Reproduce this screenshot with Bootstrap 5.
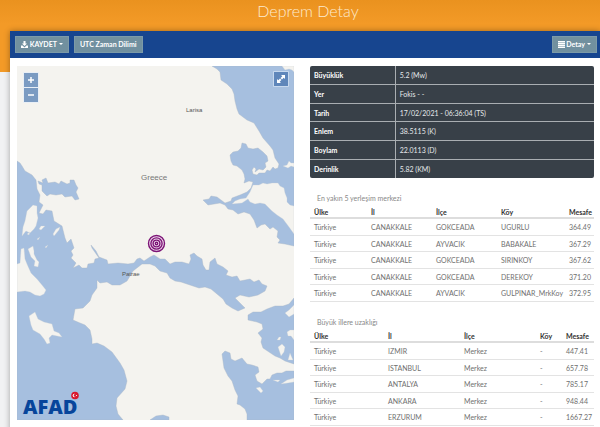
<!DOCTYPE html>
<html lang="tr">
<head>
<meta charset="utf-8">
<meta name="viewport" content="width=device-width, initial-scale=1">
<title>Deprem Detay</title>
<link rel="stylesheet" href="https://cdn.jsdelivr.net/npm/bootstrap@5.3.0/dist/css/bootstrap.min.css">
<style>
body{background:linear-gradient(#ea921f,#f39a27 24px,#f39a27 72px,#f1f2f3 72px) no-repeat #f1f2f3;font-family:Lato,Roboto,sans-serif;font-size:7px;line-height:10px;color:#6f6f6f;overflow-x:hidden}
.page-title{font-size:16px;line-height:20px;font-weight:300;color:#fdebcf;padding:1px 0 10px 16px}
.panel{background:#fff;margin-left:10px;box-shadow:0 0 6px #0005}
.toolbar{background:#17458f;padding:5px 3px 5px 5px;gap:5px}
.tool-btn{--bs-btn-font-size:7px;--bs-btn-line-height:11px;--bs-btn-padding-x:5px;--bs-btn-padding-y:2px;--bs-btn-border-radius:0;--bs-btn-font-weight:700;--bs-btn-color:#fff;--bs-btn-bg:#71909f;--bs-btn-border-color:#7c9aa8;--bs-btn-hover-bg:#5f7f8f;--bs-btn-hover-color:#fff}
.tool-btn::after{margin-left:2px;border-width:2px}
.tool-btn svg{width:7px;height:7px;vertical-align:-1px}
.content-grid{display:grid;grid-template-columns:minmax(0,277fr) minmax(0,284fr);gap:16px;padding:8px 6px 8px 7px;align-items:start}
.map-area svg.map{width:100%;height:auto}
.map-btn{display:flex;width:14px;height:14px;background:#7b9bc2;color:#fff;border:0;padding:0;align-items:center;justify-content:center}
.zoom-box{top:6px;left:6px;padding:1px;gap:1px;background:#e9eff6}
.full-box{top:5px;right:5px;padding:1px;background:#c8d9ee;border-radius:1px}
.full-box .map-btn{background:#5f86ba}
.map-btn svg{width:8px;height:8px}
.facts{height:112px;background:#384048;color:#e5e8ea;border-radius:2px;border-collapse:collapse}
.facts th,.facts td{padding:0 4px;border-bottom:1px solid #a9aeb2}
.facts th{width:30%;color:#fff;border-right:1px solid #a9aeb2}
.facts tr:last-child>*{border-bottom:0}
.near-title{font-size:7px;line-height:10px;color:#888;margin:15px 0 4px 7px;font-weight:400}
.near{height:95px;table-layout:fixed}
.near th,.near td{padding:0 0 0 4px;border-bottom:1px solid #e3e3e3;white-space:nowrap}
.near th{color:#333;border-bottom:2px solid #ddd}
.c57{width:57px}.c65{width:65px}.c68{width:68px}.c74{width:74px}.c76{width:76px}.c26{width:26px}
</style>
<script src="https://cdn.jsdelivr.net/npm/bootstrap@5.3.0/dist/js/bootstrap.bundle.min.js"></script>
</head>
<body>
<h1 class="page-title text-center m-0">Deprem Detay</h1>
<main class="panel">
<div class="toolbar d-flex">
<button type="button" class="btn tool-btn dropdown-toggle"><svg viewBox="0 0 14 14" fill="currentColor" aria-hidden="true"><path d="M5 0h4v5h3L7 10 2 5h3zM0 9h3l4 4 4-4h3v5H0z"/></svg> KAYDET</button>
<button type="button" class="btn tool-btn">UTC Zaman Dilimi</button>
<button type="button" class="btn tool-btn dropdown-toggle ms-auto"><svg viewBox="0 0 14 14" fill="currentColor" aria-hidden="true"><path d="M0 0h14v3H0zM0 4h14v2.500H0zM0 7.500h14V10H0zM0 11h14v3H0z"/></svg> Detay</button>
</div>
<div class="content-grid">
<section class="map-area position-relative">
<svg class="map d-block" viewBox="17 65 277 354" role="img" aria-label="Greece">
<rect x="17" y="65" width="277" height="354" fill="#f4f3ef"/>
<g fill="#a6bfdf" stroke="#a9b5c4" stroke-width=".4" stroke-linejoin="round">
<path d="M212 65L217 68 220 71 221 79 227 83 232 88 234 93 235 100 237 108 239 113 247 119 254 122 259 130 263 137 270 145 273 149 275 157 279 163 278 167 275 168 273 166 270 170 267 169 265 172 259 172 257 174 253 173 252 169 254 166 256 168 255 171 259 168 263 169 266 166 265 162 268 160 267 155 263 151 258 147 253 148 248 147 246 143 242 142 241 147 238 150 233 151 230 154 231 160 233 164 237 165 242 169 244 173 245 178 244 182 249 180 253 181 251 187 247 191 240 194 232 197 231 200 225 202 221 199 217 196 211 195 209 198 203 199 206 202 208 204 214 203 220 202 225 204 228 208 233 209 238 213 244 211 250 213 254 219 257 227 261 224 265 223 270 228 273 226 278 230 277 236 280 239 278 242 285 243 294 245V65z"/>
<path d="M17 160L20 162 22 165 25 170 32 174 36 179 37 188 40 194 39 201 43 204 39 212 43 213 46 209 52 210 54 220 62 225 65 237 67 242 71 238 74 247 71 250 73 254 71 257 76 262 73 267 79 264 82 267 87 267 88 263 94 262 95 258 99 257 92 247 91 244 96 250 99 256 107 259 108 263 118 262 128 263 134 262 137 258 140 257 144 260 150 256 154 254 160 258 165 258 170 263 175 261 182 261 189 263 191 258 190 254 194 252 197 255 202 258 203 264 206 269 209 269 210 261 215 257 217 263 223 266 228 270 226 274 232 276 237 275 240 280 250 278 254 281 259 279 262 283 267 285 265 290 258 294 249 296 240 294 235 297 240 302 245 307 238 310 232 307 226 303 223 298 217 293 211 288 205 286 199 287 190 284 181 281 175 280 170 277 167 272 160 270 155 265 150 263 142 263 133 270 130 275 127 280 120 284 112 284 107 281 100 282 97 279 97 287 92 294 90 300 83 307 75 308 73 319 80 322 85 324 90 329 92 338 92 343 97 342 104 345 112 351 120 362 124 369 127 380 125 388 117 397 116 405 118 413 123 419H17z"/>
<path d="M38 180L43 182 42 179 46 177 48 182 55 181 59 183 61 180 67 183 70 182 70 179 74 179 76 184 78 187 76 191 79 198 75 199 72 195 65 196 62 193 56 194 50 193 47 195 42 190 42 184 39 183z"/>
<path d="M150 419L156 415 163 414 169 416 169 419zM294 297L289 303 283 305 275 305 267 308 261 311 253 311 248 314 248 319 257 321 262 323 263 328 258 332 262 337 261 341 263 347 269 351 275 355 280 357 285 360 294 363z"/>
<path d="M222 353L225 350 230 352 231 358 235 360 242 357 247 363 252 364 258 366 259 371 255 374 257 380 262 383 267 378 270 378 272 374 277 372 282 372 286 370 294 370V419H247L247 413 245 408 240 404 237 403 238 395 235 389 232 380 228 375 224 367 223 360z"/>
</g>
<g fill="#f4f3ef" stroke="#c4cbd2" stroke-width=".3">
<path d="M253 184L259 184 263 182 267 183 272 182 278 182 280 185 284 187 285 192 287 197 287 201 290 204 294 205V233L289 226 283 218 277 214 272 210 265 203 260 202 255 203 250 201 248 198 242 202 232 203 235 200 240 198 246 197 250 191z"/>
<path d="M282 65H294V71L292 69 289 68 285 69zM283 165L287 164 289 160 291 162 294 162V166L291 165 288 167z"/>
<path d="M33 204L37 205 37 212 38 217 36 225 34 228 30 232 26 230 22 235 23 226 25 220 27 210zM17 263L20 262 21 248 24 247 25 258 27 263 31 272 37 278 42 284 46 289 44 293 40 295 35 294 30 291 25 290 17 291zM28 248L33 245 34 250 34 253 37 259 39 261 38 266 34 265 35 260 31 256zM29 315L35 311 38 318 44 321 52 323 54 330 59 332 62 336 52 334 49 337 50 342 47 343 44 338 40 333 33 329 31 324zM53 233L56 228 60 226 59 229 54 235zM39 228L41 225 45 225 41 229zM37 238L40 236 38 239zM45 246L48 244 46 247zM27 233L30 231 29 234z"/>
<path d="M278 346L282 343 285 346 284 351 281 355zM277 339L279 336 281 336 280 339zM287 331L290 329 294 329V339L291 335 288 335zM285 312L289 309 294 304V313L289 316zM288 359L290 352 293 359zM281 383L287 379 294 377V381L288 382zM256 387L260 386 263 390 261 392zM273 379L280 379 278 381z"/>
</g>
<g font-family="Liberation Sans, sans-serif" fill="#555"><text x="186" y="111" font-size="6">Larisa</text><text x="141" y="179" font-size="8" fill="#777">Greece</text><text x="122" y="275" font-size="6">Patrae</text></g>
<g fill="none" stroke="#7c1476" stroke-width="1.400"><circle cx="156.500" cy="242.500" r="8" fill="#f3dff1"/><circle cx="156.500" cy="242.500" r="5.600"/><circle cx="156.500" cy="242.500" r="3.400"/><circle cx="156.500" cy="242.500" r="1.200"/></g>
<text x="23" y="413" font-family="Open Sans, sans-serif" font-weight="800" font-size="20" fill="#07459b">AFAD</text>
<circle cx="75" cy="394.500" r="3.800" fill="#d9182d"/><circle cx="74.500" cy="394.500" r="1.800" fill="#fff"/><circle cx="75.200" cy="394.500" r="1.400" fill="#d9182d"/><circle cx="76.500" cy="394.500" r=".6" fill="#fff"/>
</svg>
<div class="zoom-box position-absolute d-flex flex-column"><button type="button" class="map-btn" aria-label="Yakınlaştır"><svg viewBox="0 0 8 8" stroke="#fff" stroke-width="1.500"><path d="M1 4h6M4 1v6"/></svg></button><button type="button" class="map-btn" aria-label="Uzaklaştır"><svg viewBox="0 0 8 8" stroke="#fff" stroke-width="1.500"><path d="M1 4h6"/></svg></button></div>
<div class="full-box position-absolute"><button type="button" class="map-btn" aria-label="Tam ekran"><svg viewBox="0 0 8 8" fill="#fff"><path d="M4 0h4v4L6.700 2.700 5 4.400 3.600 3l1.700-1.700zM0 4l1.300 1.300L3 3.600 4.400 5 2.700 6.700 4 8H0z"/></svg></button></div>
</section>
<section>
<table class="facts w-100">
<tr><th scope="row">Büyüklük</th><td>5.2 (Mw)</td></tr>
<tr><th scope="row">Yer</th><td>Fokis - -</td></tr>
<tr><th scope="row">Tarih</th><td>17/02/2021 - 06:36:04 (TS)</td></tr>
<tr><th scope="row">Enlem</th><td>38.5115 (K)</td></tr>
<tr><th scope="row">Boylam</th><td>22.0113 (D)</td></tr>
<tr><th scope="row">Derinlik</th><td>5.82 (KM)</td></tr>
</table>
<h2 class="near-title">En yakın 5 yerleşim merkezi</h2>
<table class="near w-100">
<thead><tr><th class="c57">Ülke</th><th class="c65">İl</th><th class="c65">İlçe</th><th class="c68">Köy</th><th>Mesafe</th></tr></thead>
<tbody>
<tr><td>Türkiye</td><td>CANAKKALE</td><td>GOKCEADA</td><td>UGURLU</td><td>364.49</td></tr>
<tr><td>Türkiye</td><td>CANAKKALE</td><td>AYVACIK</td><td>BABAKALE</td><td>367.29</td></tr>
<tr><td>Türkiye</td><td>CANAKKALE</td><td>GOKCEADA</td><td>SIRINKOY</td><td>367.62</td></tr>
<tr><td>Türkiye</td><td>CANAKKALE</td><td>GOKCEADA</td><td>DEREKOY</td><td>371.20</td></tr>
<tr><td>Türkiye</td><td>CANAKKALE</td><td>AYVACIK</td><td>GULPINAR_MrkKoy</td><td>372.95</td></tr>
</tbody></table>
<h2 class="near-title">Büyük illere uzaklığı</h2>
<table class="near w-100">
<thead><tr><th class="c74">Ülke</th><th class="c76">İl</th><th class="c76">İlçe</th><th class="c26">Köy</th><th>Mesafe</th></tr></thead>
<tbody>
<tr><td>Türkiye</td><td>IZMIR</td><td>Merkez</td><td>-</td><td>447.41</td></tr>
<tr><td>Türkiye</td><td>ISTANBUL</td><td>Merkez</td><td>-</td><td>657.78</td></tr>
<tr><td>Türkiye</td><td>ANTALYA</td><td>Merkez</td><td>-</td><td>785.17</td></tr>
<tr><td>Türkiye</td><td>ANKARA</td><td>Merkez</td><td>-</td><td>948.44</td></tr>
<tr><td>Türkiye</td><td>ERZURUM</td><td>Merkez</td><td>-</td><td>1667.27</td></tr>
</tbody></table>
</section>
</div>
</main>
</body>
</html>
